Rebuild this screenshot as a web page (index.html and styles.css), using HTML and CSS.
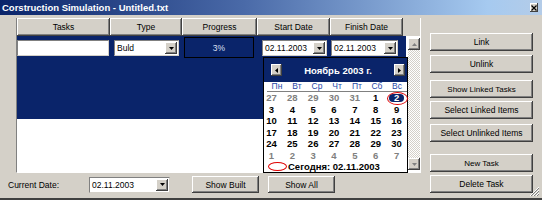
FILE: index.html
```html
<!DOCTYPE html>
<html>
<head>
<meta charset="utf-8">
<link rel="stylesheet" href="styles.css">
</head>
<body>
<div class="window">
  <div class="titlebar">
    <span class="title">Corstruction Simulation - Untitled.txt</span>
    <span class="close"><svg width="6" height="6" viewBox="0 0 6 6"><path d="M0.5 0.5L5.5 5.5M5.5 0.5L0.5 5.5" stroke="#000" stroke-width="1.2"/></svg></span>
  </div>
  <div class="main">
    <div class="left">
      <div class="grid">
        <div class="ghead">
          <div class="hcell c1">Tasks</div>
          <div class="hcell c2">Type</div>
          <div class="hcell c3">Progress</div>
          <div class="hcell c4">Start Date</div>
          <div class="hcell c5">Finish Date</div>
        </div>
        <div class="gbody">
          <div class="rows">
            <div class="row">
              <div class="edit e-task"></div>
              <div class="combo e-type"><span class="ctext">Buld</span><span class="dd"><svg width="5" height="3" viewBox="0 0 5 3"><path d="M0 0H5L2.5 3Z" fill="#000"/></svg></span></div>
              <div class="progress">3%</div>
              <div class="combo e-start"><span class="ctext">02.11.2003</span><span class="dd"><svg width="5" height="3" viewBox="0 0 5 3"><path d="M0 0H5L2.5 3Z" fill="#000"/></svg></span></div>
              <div class="combo e-finish"><span class="ctext">02.11.2003</span><span class="dd"><svg width="5" height="3" viewBox="0 0 5 3"><path d="M0 0H5L2.5 3Z" fill="#000"/></svg></span></div>
            </div>
            <div class="fill"></div>
          </div>
          <div class="vscroll">
            <span class="sbtn"><svg width="5" height="3" viewBox="0 0 5 3"><path d="M0 3H5L2.5 0Z" fill="#808080"/></svg></span>
            <span class="track"></span>
            <span class="sbtn"><svg width="5" height="3" viewBox="0 0 5 3"><path d="M0 0H5L2.5 3Z" fill="#808080"/></svg></span>
          </div>
        </div>
      </div>
      <div class="bottom">
        <span class="label">Current Date:</span>
        <div class="combo e-current"><span class="ctext">02.11.2003</span><span class="dd"><svg width="5" height="3" viewBox="0 0 5 3"><path d="M0 0H5L2.5 3Z" fill="#000"/></svg></span></div>
        <div class="btn b-built">Show Built</div>
        <div class="btn b-all">Show All</div>
      </div>
    </div>
    <div class="right">
      <div class="btn r-link">Link</div>
      <div class="btn r-unlink">Unlink</div>
      <div class="btn r-showlinked small">Show Linked Tasks</div>
      <div class="btn r-sellinked">Select Linked Items</div>
      <div class="btn r-selunlinked">Select Unlinked Items</div>
      <div class="btn r-new small">New Task</div>
      <div class="btn r-delete">Delete Task</div>
    </div>
  </div>
  <div class="calendar">
    <div class="cal-head">
      <span class="cbtn"><svg width="3" height="5" viewBox="0 0 3 5"><path d="M3 0V5L0 2.5Z" fill="#000"/></svg></span>
      <span class="month">Ноябрь 2003 г.</span>
      <span class="cbtn"><svg width="3" height="5" viewBox="0 0 3 5"><path d="M0 0V5L3 2.5Z" fill="#000"/></svg></span>
    </div>
    <div class="weekdays">
      <span>Пн</span><span>Вт</span><span>Ср</span><span>Чт</span><span>Пт</span><span>Сб</span><span>Вс</span>
    </div>
    <div class="days">
      <span class="other">27</span><span class="other">28</span><span class="other">29</span><span class="other">30</span><span class="other">31</span><span>1</span><span class="sel"><b>2</b></span>
      <span>3</span><span>4</span><span>5</span><span>6</span><span>7</span><span>8</span><span>9</span>
      <span>10</span><span>11</span><span>12</span><span>13</span><span>14</span><span>15</span><span>16</span>
      <span>17</span><span>18</span><span>19</span><span>20</span><span>21</span><span>22</span><span>23</span>
      <span>24</span><span>25</span><span>26</span><span>27</span><span>28</span><span>29</span><span>30</span>
      <span class="other">1</span><span class="other">2</span><span class="other">3</span><span class="other">4</span><span class="other">5</span><span class="other">6</span><span class="other">7</span>
    </div>
    <div class="today"><span class="ring"></span><span class="ttext">Сегодня: 02.11.2003</span></div>
  </div>
  <svg class="grip" width="11" height="11" viewBox="0 0 11 11">
    <path d="M10 1L1 10M10 4L4 10M10 7L7 10" stroke="#fff" stroke-width="1"/>
    <path d="M10 2L2 10M10 5L5 10M10 8L8 10" stroke="#808080" stroke-width="1"/>
  </svg>
</div>
</body>
</html>
```
FILE: styles.css
```css
* { box-sizing: border-box; }
html, body { margin: 0; padding: 0; }
body {
  width: 542px;
  height: 200px;
  overflow: hidden;
  font-family: "Liberation Sans", Arial, sans-serif;
  font-size: 8.5px;
  color: #000;
}
.window {
  position: relative;
  width: 542px;
  height: 200px;
  background: #d4d0c8;
  border-bottom: 2px solid #404040;
  display: flex;
  flex-direction: column;
}
.titlebar {
  height: 15px;
  flex: none;
  background: linear-gradient(90deg, #0a246a 0%, #4a6aa8 45%, #a6caf0 90%, #b4cce8 100%);
  display: flex;
  align-items: center;
  justify-content: space-between;
  padding: 0 4px 0 2px;
}
.title {
  color: #fff;
  font-weight: bold;
  font-size: 9.5px;
  white-space: nowrap;
}
.close {
  width: 8px;
  height: 9px;
  background: #d4d0c8;
  box-shadow: inset -1px -1px #404040, inset 1px 1px #fff;
  display: flex;
  align-items: center;
  justify-content: center;
}
.main {
  display: flex;
  padding: 3px 0 0 8px;
}
.left {
  width: 413px;
  flex: none;
  display: flex;
  flex-direction: column;
}
.grid {
  margin-left: 8px;
  width: 405px;
  height: 155px;
  border-left: 1px solid #808080;
  border-right: 1px solid #fff;
  border-bottom: 1px solid #fff;
  display: flex;
  flex-direction: column;
}
.ghead {
  height: 18px;
  flex: none;
  display: flex;
}
.hcell {
  height: 18px;
  line-height: 18px;
  text-align: center;
  background: #d4d0c8;
  box-shadow: inset -1px -1px #404040, inset 1px 1px #fff, inset -2px -2px #808080;
  white-space: nowrap;
}
.c1 { width: 93px; }
.c2 { width: 72px; }
.c3 { width: 75px; }
.c4 { width: 73px; }
.c5 { width: 73px; }
.gbody {
  flex: 1;
  display: flex;
}
.rows {
  width: 389px;
  background: #fff;
  display: flex;
  flex-direction: column;
}
.row {
  height: 22px;
  background: #0a246a;
  display: flex;
  align-items: flex-end;
  padding-bottom: 2px;
}
.fill {
  height: 61px;
  background: #0a246a;
}
.edit, .combo {
  height: 16px;
  background: #fff;
  border-top: 1px solid #808080;
  border-left: 1px solid #808080;
  border-right: 1px solid #d4d0c8;
  border-bottom: 1px solid #d4d0c8;
}
.combo {
  display: flex;
  align-items: center;
  justify-content: space-between;
  padding: 0 1px 0 2px;
}
.ctext { white-space: nowrap; }
.dd {
  width: 12px;
  height: 12px;
  background: #d4d0c8;
  box-shadow: inset -1px -1px #404040, inset 1px 1px #fff, inset -2px -2px #808080;
  display: flex;
  align-items: center;
  justify-content: center;
}
.e-task { width: 92px; }
.e-type { width: 65px; margin-left: 5px; }
.progress {
  width: 70px;
  height: 21px;
  margin-left: 5px;
  margin-bottom: -2px;
  border: 1px solid #000;
  background: #0a246a;
  color: #dde0f4;
  display: flex;
  align-items: center;
  justify-content: center;
}
.e-start { width: 65px; margin-left: 8px; }
.e-finish { width: 67px; margin-left: 4px; }
.vscroll {
  width: 14px;
  display: flex;
  flex-direction: column;
  padding: 2px 0 2px 2px;
  background: #fff;
}
.sbtn {
  width: 12px;
  height: 12px;
  flex: none;
  background: #d4d0c8;
  box-shadow: inset -1px -1px #404040, inset 1px 1px #fff, inset -2px -2px #808080;
  display: flex;
  align-items: center;
  justify-content: center;
}
.track {
  flex: 1;
  background: repeating-conic-gradient(#fff 0 25%, #d4d0c8 0 50%) 0 0 / 2px 2px;
}
.bottom {
  margin-top: 3px;
  height: 17px;
  display: flex;
  align-items: center;
}
.label {
  width: 81px;
  white-space: nowrap;
}
.e-current { width: 81px; }
.btn {
  height: 18px;
  background: #d4d0c8;
  box-shadow: inset -1px -1px #404040, inset 1px 1px #fff, inset -2px -2px #808080;
  display: flex;
  align-items: center;
  justify-content: center;
  white-space: nowrap;
}
.b-built { width: 67px; margin-left: 22px; height: 17px; }
.b-all { width: 67px; margin-left: 9px; height: 17px; }
.right {
  margin-left: 9px;
  width: 103px;
  padding-top: 15px;
  display: flex;
  flex-direction: column;
}
.small { font-size: 8px; }
.r-unlink { margin-top: 4px; }
.r-showlinked { margin-top: 7px; }
.r-sellinked { margin-top: 3px; }
.r-selunlinked { margin-top: 5px; }
.r-new { margin-top: 12px; }
.r-delete { margin-top: 3px; }
.calendar {
  position: absolute;
  left: 263px;
  top: 57px;
  width: 145px;
  height: 116px;
  border: 1px solid #000;
  background: #fff;
  display: flex;
  flex-direction: column;
  font-weight: bold;
  font-size: 9.5px;
}
.cal-head {
  height: 24px;
  flex: none;
  background: #0a246a;
  display: flex;
  align-items: center;
  justify-content: space-between;
  padding: 0 2px 0 7px;
}
.cbtn {
  width: 11px;
  height: 12px;
  background: #d4d0c8;
  box-shadow: inset -1px -1px #404040, inset 1px 1px #fff, inset -2px -2px #808080;
  display: flex;
  align-items: center;
  justify-content: center;
}
.month {
  color: #fff;
  font-size: 9.5px;
}
.weekdays {
  height: 10px;
  flex: none;
  display: grid;
  grid-template-columns: repeat(7, 1fr);
  border-bottom: 1px solid #808080;
  margin-left: 3px;
  padding-right: 0;
  font-weight: normal;
  font-size: 8.5px;
  color: #2848a8;
  line-height: 9px;
}
.weekdays span { text-align: center; }
.days {
  display: grid;
  grid-template-columns: repeat(7, 1fr);
  grid-auto-rows: 11.5px;
  margin-left: -3px;
}
.days span {
  text-align: center;
  line-height: 11.5px;
}
.days .other { color: #808080; }
.days .sel {
  position: relative;
  display: flex;
  align-items: center;
  justify-content: center;
}
.days .sel b {
  display: block;
  width: 15px;
  height: 8px;
  line-height: 8px;
  background: #0a246a;
  color: #fff;
  border-radius: 4px;
}
.days .sel::after {
  content: "";
  position: absolute;
  left: 1px;
  top: 0;
  width: 19px;
  height: 11px;
  border: 1px solid #e00000;
  border-radius: 50%;
}
.today {
  flex: 1;
  display: flex;
  align-items: center;
  padding-left: 4px;
}
.ring {
  width: 19px;
  height: 9px;
  border: 1.5px solid #e00000;
  border-radius: 50%;
  margin-right: 1px;
}
.ttext { white-space: nowrap; }
.grip {
  position: absolute;
  right: 2px;
  bottom: 1px;
}
```
